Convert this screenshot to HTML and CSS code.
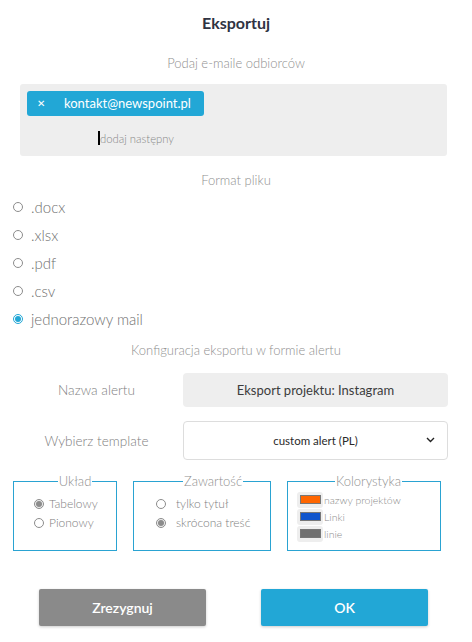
FILE: index.html
```html
<!DOCTYPE html>
<html lang="pl">
<head>
  <meta charset="UTF-8">
  <title>Eksportuj</title>
  <link rel="stylesheet" href="styles.css">
</head>
<body>
  <div class="dialog">
    <h1>Eksportuj</h1>

    <div class="section-title first">Podaj e-maile odbiorców</div>
    <div class="emails">
      <div class="chip"><span class="chip-x">&#x2715;</span>kontakt@newspoint.pl</div>
      <div class="add-more"><span class="caret"></span>dodaj następny</div>
    </div>

    <div class="section-title format">Format pliku</div>
    <div class="formats">
      <label class="opt"><input type="radio" name="fmt"> .docx</label>
      <label class="opt"><input type="radio" name="fmt"> .xlsx</label>
      <label class="opt"><input type="radio" name="fmt"> .pdf</label>
      <label class="opt"><input type="radio" name="fmt"> .csv</label>
      <label class="opt"><input type="radio" name="fmt" checked> jednorazowy mail</label>
    </div>

    <div class="section-title config">Konfiguracja eksportu w formie alertu</div>
    <div class="form-row">
      <div class="form-label">Nazwa alertu</div>
      <div class="text-field">Eksport projektu: Instagram</div>
    </div>
    <div class="form-row second">
      <div class="form-label">Wybierz template</div>
      <div class="select-field">
        <span>custom alert (PL)</span>
        <svg class="chevron" width="9" height="6" viewBox="0 0 9 6"><path d="M1 1l3.5 3.5L8 1" fill="none" stroke="#222" stroke-width="1.4"/></svg>
      </div>
    </div>

    <div class="groups">
      <fieldset class="group layout">
        <legend>Układ</legend>
        <label class="small-opt"><input type="radio" name="layout" checked> Tabelowy</label>
        <label class="small-opt"><input type="radio" name="layout"> Pionowy</label>
      </fieldset>
      <fieldset class="group content">
        <legend>Zawartość</legend>
        <label class="small-opt"><input type="radio" name="content"> tylko tytuł</label>
        <label class="small-opt"><input type="radio" name="content" checked> skrócona treść</label>
      </fieldset>
      <fieldset class="group colors">
        <legend>Kolorystyka</legend>
        <div class="color-row"><span class="swatch"><i class="orange"></i></span>nazwy projektów</div>
        <div class="color-row"><span class="swatch"><i class="blue"></i></span>Linki</div>
        <div class="color-row"><span class="swatch"><i class="grey"></i></span>linie</div>
      </fieldset>
    </div>

    <div class="buttons">
      <button class="btn cancel">Zrezygnuj</button>
      <button class="btn ok">OK</button>
    </div>
  </div>
</body>
</html>
```

FILE: styles.css
```css
body {
  margin: 0;
  background: #fff;
  font-family: Lato, 'Open Sans', sans-serif;
  font-weight: 300;
  color: #777;
}

.dialog {
  width: 472px;
  height: 642px;
}

h1 {
  margin: 0;
  height: 46px;
  line-height: 46px;
  text-align: center;
  font-size: 16px;
  font-weight: bold;
  color: #2f3342;
}

.section-title {
  height: 20px;
  line-height: 20px;
  text-align: center;
  font-size: 13px;
  color: #8f8f8f;
}

.section-title.first {
  margin-top: 7px;
  margin-bottom: 11px;
}

.emails {
  margin: 0 25px 0 20px;
  height: 72px;
  padding: 7px;
  box-sizing: border-box;
  background: #eee;
  border-radius: 3px;
}

.chip {
  width: 177px;
  height: 25px;
  line-height: 25px;
  background: #22a7d6;
  color: #fff;
  border-radius: 3px;
  font-size: 13px;
  font-weight: 400;
  display: flex;
  align-items: center;
}

.chip-x {
  width: 37px;
  padding-left: 10px;
  box-sizing: border-box;
  font-size: 10px;
}

.add-more {
  margin-top: 12px;
  padding-left: 71px;
  height: 20px;
  display: flex;
  align-items: center;
  font-size: 11.3px;
  color: #888;
}

.caret {
  display: inline-block;
  width: 2px;
  height: 14px;
  background: #000;
}

.section-title.format {
  margin-top: 14px;
}

.formats {
  margin-top: 3px;
  padding-left: 13px;
}

.opt {
  display: flex;
  align-items: center;
  height: 28px;
  font-size: 15px;
  color: #707070;
}

input[type="radio"] {
  appearance: none;
  -webkit-appearance: none;
  margin: 0 8px 0 0;
  width: 10px;
  height: 10px;
  border: 1px solid #8c8c8c;
  border-radius: 50%;
  background: #fff;
  box-sizing: border-box;
  display: inline-grid;
  place-content: center;
}

input[type="radio"]:checked::before {
  content: "";
  width: 6px;
  height: 6px;
  border-radius: 50%;
  background: #8c8c8c;
}

.opt input[type="radio"]:checked {
  border-color: #22a7d6;
}

.opt input[type="radio"]:checked::before {
  background: #22a7d6;
}

.section-title.config {
  margin-top: 7px;
}

.form-row {
  display: flex;
  align-items: center;
  margin-top: 13px;
  padding-left: 20px;
}

.form-row.second {
  margin-top: 14px;
}

.form-label {
  width: 153px;
  margin-right: 10px;
  text-align: center;
  font-size: 13.6px;
  color: #808080;
}

.text-field {
  width: 265px;
  height: 34px;
  line-height: 34px;
  background: #eee;
  border-radius: 4px;
  text-align: center;
  font-size: 13px;
  font-weight: 400;
  color: #3c3c3c;
}

.select-field {
  position: relative;
  width: 265px;
  height: 39px;
  box-sizing: border-box;
  border: 1px solid #ddd;
  border-radius: 4px;
  display: flex;
  align-items: center;
  justify-content: center;
  font-size: 11.5px;
  font-weight: 400;
  color: #2a2a2a;
}

.chevron {
  position: absolute;
  right: 12px;
  top: 15px;
}

.groups {
  display: flex;
  gap: 16px;
  margin-top: 14px;
  padding-left: 13px;
}

.group {
  margin: 0;
  height: 77px;
  box-sizing: border-box;
  border: 1px solid #2aa3d2;
  padding: 6px 0 0;
}

.group legend {
  margin: 0 auto;
  padding: 0 1px;
  font-size: 13px;
  line-height: 14px;
  color: #8f8f8f;
}

.group.layout {
  width: 104px;
  padding-left: 20px;
}

.group.content {
  width: 138px;
  padding-left: 22px;
}

.group.colors {
  width: 154px;
  padding-left: 9px;
  padding-top: 3px;
}

.small-opt {
  display: flex;
  align-items: center;
  height: 19px;
  font-size: 12px;
  color: #808080;
}

.group.layout .small-opt input {
  margin-right: 5px;
}

.group.content .small-opt input {
  margin-right: 10px;
}

.small-opt input[type="radio"]:checked {
  background: #eee;
}

.color-row {
  display: flex;
  align-items: center;
  height: 17px;
  font-size: 10.5px;
  color: #8a8a8a;
}

.swatch {
  width: 26px;
  height: 16px;
  margin-right: 1px;
  background: #eee;
  border-radius: 3px;
  display: flex;
  align-items: center;
  justify-content: center;
}

.swatch i {
  width: 19px;
  height: 7px;
  border: 1px solid #777;
}

.swatch .orange { background: #ff6600; }
.swatch .blue { background: #1155cc; }
.swatch .grey { background: #707070; }

.buttons {
  display: flex;
  gap: 55px;
  margin-top: 38px;
  padding-left: 39px;
}

.btn {
  width: 167px;
  height: 37px;
  border: none;
  border-radius: 2px;
  color: #fff;
  font-family: Lato, sans-serif;
  font-size: 14px;
  font-weight: 600;
  box-shadow: 0 1px 3px rgba(0, 0, 0, 0.2);
}

.btn.cancel { background: #8a8a8a; }
.btn.ok { background: #22a7d6; }
```
